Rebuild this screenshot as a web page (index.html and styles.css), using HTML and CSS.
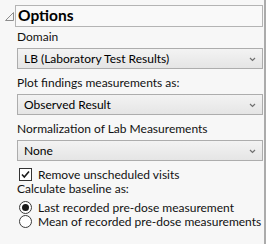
FILE: index.html
```html
<!DOCTYPE html>
<html lang="en">
<head>
  <meta charset="UTF-8" />
  <title>Options</title>
  <link rel="stylesheet" href="styles.css">
</head>
<body>
  <div class="panel">
    <div class="panel-header">
      <svg class="toggle" width="9" height="9" viewBox="0 0 9 9">
        <path d="M8.5 0.5 L8.5 8.5 L0.5 8.5 Z" fill="#f4f4f4" stroke="#8c8c8c" stroke-width="1" />
      </svg>
      <div class="title-box">Options</div>
    </div>

    <div class="panel-body">
      <label class="field-label">Domain</label>
      <div class="select">
        <span>LB (Laboratory Test Results)</span>
        <svg class="chevron" width="7" height="5" viewBox="0 0 7 5"><path d="M1 1 L3.5 3.5 L6 1" fill="none" stroke="#707070" stroke-width="1.2" /></svg>
      </div>

      <label class="field-label">Plot findings measurements as:</label>
      <div class="select">
        <span>Observed Result</span>
        <svg class="chevron" width="7" height="5" viewBox="0 0 7 5"><path d="M1 1 L3.5 3.5 L6 1" fill="none" stroke="#707070" stroke-width="1.2" /></svg>
      </div>

      <label class="field-label">Normalization of Lab Measurements</label>
      <div class="select">
        <span>None</span>
        <svg class="chevron" width="7" height="5" viewBox="0 0 7 5"><path d="M1 1 L3.5 3.5 L6 1" fill="none" stroke="#707070" stroke-width="1.2" /></svg>
      </div>

      <div class="option check-row">
        <span class="checkbox">
          <svg width="11" height="11" viewBox="0 0 11 11"><path d="M2 5.5 L4.3 8 L9 2.5" fill="none" stroke="#1a1a1a" stroke-width="1.6" /></svg>
        </span>
        <span>Remove unscheduled visits</span>
      </div>

      <div class="group-label">Calculate baseline as:</div>
      <div class="option">
        <span class="radio checked"></span>
        <span>Last recorded pre-dose measurement</span>
      </div>
      <div class="option">
        <span class="radio"></span>
        <span>Mean of recorded pre-dose measurements</span>
      </div>
    </div>
  </div>
</body>
</html>
```

FILE: styles.css
```css
* {
  margin: 0;
  padding: 0;
  box-sizing: border-box;
  font-family: Lato, 'Open Sans', sans-serif;
}

body {
  background-color: #f7f7f7;
  color: #111;
  font-size: 12px;
  width: 266px;
  height: 244px;
  white-space: nowrap;
}

.panel {
  height: 244px;
  border-right: 2px solid #ababab;
  padding: 5px 1px 0 5px;
}

.panel-header {
  display: flex;
  align-items: flex-start;
}

.toggle {
  margin-top: 7px;
  flex-shrink: 0;
}

.title-box {
  flex: 1;
  height: 22px;
  margin-left: 1px;
  border: 1px solid #b4b4b4;
  background: #f9f9f9;
  font-weight: bold;
  font-size: 15.5px;
  line-height: 19px;
  padding-left: 2px;
  color: #000;
}

.panel-body {
  padding: 2px 0 0 12px;
}

.field-label,
.group-label {
  display: block;
  line-height: 16px;
}

.field-label {
  margin-bottom: 3px;
}

.select {
  display: flex;
  align-items: center;
  justify-content: space-between;
  height: 21px;
  border: 1px solid #adadad;
  background: linear-gradient(#f3f3f3, #e5e5e5);
  padding: 0 6px 0 6px;
  margin-bottom: 6px;
  color: #000;
}

.chevron {
  margin-top: 1px;
}

.option {
  display: flex;
  align-items: center;
  height: 14px;
  padding-left: 2px;
}

.check-row {
  margin-bottom: 0;
}

.checkbox {
  width: 13px;
  height: 13px;
  border: 1px solid #333;
  background: #fff;
  display: flex;
  align-items: center;
  justify-content: center;
  margin-right: 6px;
}

.radio {
  width: 13px;
  height: 13px;
  border: 1px solid #3a3a3a;
  border-radius: 50%;
  background: #fff;
  margin-right: 6px;
  display: flex;
  align-items: center;
  justify-content: center;
}

.radio.checked::after {
  content: "";
  width: 7px;
  height: 7px;
  border-radius: 50%;
  background: #1a1a1a;
}

.group-label {
  margin-bottom: 3px;
}
```
